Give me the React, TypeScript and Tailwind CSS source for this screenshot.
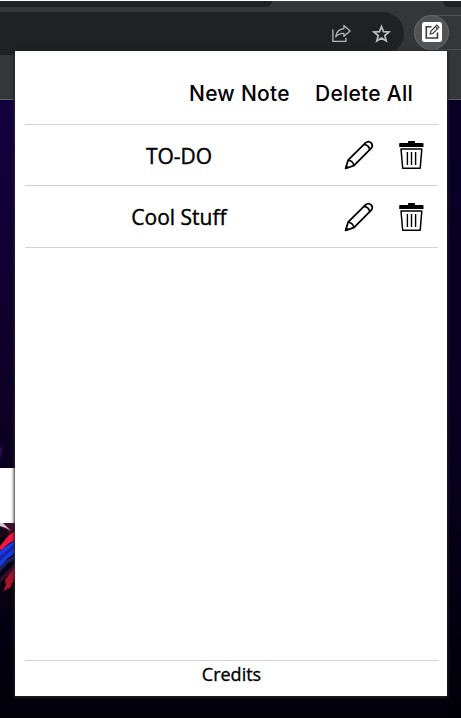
import React from "react";

const notes = ["TO-DO", "Cool Stuff"];

function ShareIcon() {
  return (
    <svg width="22" height="20" viewBox="0 0 22 20" fill="none" stroke="#b5b7b9" strokeWidth="1.3" className="shrink-0">
      <path d="M1.9 5.5V17.3H14.9V14" />
      <path d="M12.9 1.5L19.1 7L12.9 12.3V9.3C9.2 9.1 6.9 10.2 4.7 12.8C5.3 8.3 8.2 5.1 12.9 4.6Z" strokeLinejoin="round" />
    </svg>
  );
}

function StarIcon() {
  return (
    <svg width="20" height="20" viewBox="0 0 20 20" fill="none" stroke="#bcbec0" strokeWidth="1.7" className="shrink-0">
      <path d="M9.5 2.5L11.5 7.6L17 8L12.8 11.6L14.2 17L9.5 14.1L4.8 17L6.2 11.6L2 8L7.5 7.6Z" />
    </svg>
  );
}

function ExtensionIcon() {
  return (
    <svg width="20" height="20" viewBox="0 0 20 20" fill="none" className="shrink-0">
      <rect width="20" height="20" rx="2.5" fill="#fff" />
      <path d="M9.5 4.8H4.3V16H15.5V10.5" stroke="#3b3b3b" strokeWidth="1.6" />
      <path d="M8.2 12L8.8 9.3L14.8 3.2L16.9 5.3L10.9 11.4Z M13.3 4.8L15.4 6.8" stroke="#3b3b3b" strokeWidth="1.2" />
    </svg>
  );
}

function PencilIcon() {
  return (
    <svg width="30" height="30" viewBox="0 0 30 30" fill="none" stroke="#000" strokeWidth="1.8" strokeLinejoin="round" className="shrink-0">
      <path d="M1.6 28.4L4.1 20.2L21.2 3.2C23.2 1.3 25.6 1.4 27.1 2.9C28.7 4.5 28.7 6.8 26.8 8.7L9.9 25.7Z" />
      <path d="M4.1 20.2C7.2 20.5 9.4 22.6 9.9 25.7M20 4.4C23.2 4.8 25.3 6.9 25.7 10" strokeWidth="1.6" />
      <path d="M1.6 28.4L2.5 25.8L4.2 27.5Z" fill="#000" strokeWidth="1" />
    </svg>
  );
}

function TrashIcon() {
  return (
    <svg width="26" height="30" viewBox="0 0 26 30" className="shrink-0">
      <path d="M.9 3H9V1.6Q9 1 9.8 1H15.2Q16 1 16 1.6V3H23.8Q24.5 3 24.5 3.7V7H.2V3.7Q.2 3 .9 3Z" />
      <path d="M2 9H22.8L21.2 28.3H3.7Z" fill="none" stroke="#000" strokeWidth="1.5" strokeLinejoin="round" />
      <path d="M8.4 12V25M12.5 12V25M16.6 12V25" fill="none" stroke="#000" strokeWidth="1.4" />
    </svg>
  );
}

function Backdrop() {
  return (
    <svg width="461" height="619" viewBox="0 0 461 619" className="block">
      <defs>
        <linearGradient id="night" x1="0" y1="0" x2="0" y2="1">
          <stop offset="0" stopColor="#12003f" />
          <stop offset=".5" stopColor="#0c0026" />
          <stop offset=".72" stopColor="#070017" />
          <stop offset="1" stopColor="#020009" />
        </linearGradient>
        <linearGradient id="side" x1="0" y1="0" x2="0" y2="1">
          <stop offset="0" stopColor="#090026" />
          <stop offset=".5" stopColor="#090022" />
          <stop offset="1" stopColor="#010008" />
        </linearGradient>
      </defs>
      <rect width="461" height="619" fill="url(#night)" />
      <rect x="447" width="14" height="619" fill="url(#side)" />
      <path d="M0 349L3 343L2 352L0 361Z" fill="#2c0850" />
      <rect y="368" width="15" height="55" fill="#fff" />
      <rect y="423" width="15" height="86" fill="#080310" />
      <path d="M0 423H15V430L9 434L0 437Z" fill="#430c2b" />
      <path d="M0 427L5 429L10 434L4 438L0 435Z" fill="#160616" />
      <path d="M0 423H3L11 431L6 428L0 426Z" fill="#d8c8d8" />
      <path d="M0 446L9 435L15 431V440L8 444L3 449L0 450Z" fill="#f21643" />
      <path d="M0 451L15 440V453L7 459L0 468Z" fill="#173ce8" />
      <path d="M0 456L15 444V447L0 461Z" fill="#1725a0" />
      <path d="M0 466L7 460L15 455V459L8 463L0 472Z" fill="#202266" />
      <path d="M0 478L15 463V469L0 483Z" fill="#32102c" />
      <path d="M5 480L15 467V478L10 488L3 491L6 485Z" fill="#ab122c" />
    </svg>
  );
}

export default function App() {
  return (
    <div className="relative h-[718px] w-[461px] overflow-hidden bg-[#020009]">
      <div className="h-[100px] border-b border-[#5f5f68] bg-[#35363a]">
        <div className="h-px bg-white" />
        <div className="flex h-[6px] justify-between">
          <div className="w-[272px] rounded-br-md bg-[#202124]" />
          <div className="w-[18px] rounded-bl-lg bg-[#202124]" />
        </div>
        <div className="mt-[5px] flex h-[43px] items-center">
          <div className="flex h-full w-[404px] shrink-0 items-center justify-end gap-[19px] rounded-r-[22px] bg-[#202124] pr-[12px]">
            <ShareIcon />
            <StarIcon />
          </div>
          <div className="-mt-[3px] ml-[10px] flex h-[35px] w-[80px] shrink-0 items-center rounded-l-full border border-[#505155]">
            <div className="-ml-px flex size-[35px] items-center justify-center rounded-full border border-[#66676a] bg-[#525356]">
              <ExtensionIcon />
            </div>
          </div>
        </div>
      </div>
      <Backdrop />
      <main className="absolute top-[51px] left-[15px] flex h-[645px] w-[432px] flex-col bg-white pr-[9px] pl-[10px] text-black shadow-[0_1px_3px_1px_#202126]">
        <header className="flex h-[74px] items-center justify-end gap-[25px] border-b border-[#d3d3d3] pt-[12px] pr-[25px] font-['Inter',sans-serif] text-[21px] font-medium">
          <button className="w-[101px] text-left tracking-[0.25px] whitespace-nowrap">New Note</button>
          <button className="w-[98px] text-left tracking-[0.25px] whitespace-nowrap">Delete All</button>
        </header>
        {notes.map((note, i) => (
          <div key={note} className={`flex items-center border-b border-[#d3d3d3] ${i === 0 ? "h-[61px]" : "h-[62px]"}`}>
            <span className="w-[308px] pt-[3px] text-center font-['Open_Sans',sans-serif] text-[21px] font-medium [-webkit-text-stroke:0.4px_black]">{note}</span>
            <div className="ml-[11px] flex gap-[25px]">
              <PencilIcon />
              <TrashIcon />
            </div>
          </div>
        ))}
        <footer className="mt-auto flex h-[36px] justify-center border-t border-[#d3d3d3] font-['Open_Sans',sans-serif] text-[18px] leading-[27px] font-medium [-webkit-text-stroke:0.35px_black]">
          Credits
        </footer>
      </main>
    </div>
  );
}
